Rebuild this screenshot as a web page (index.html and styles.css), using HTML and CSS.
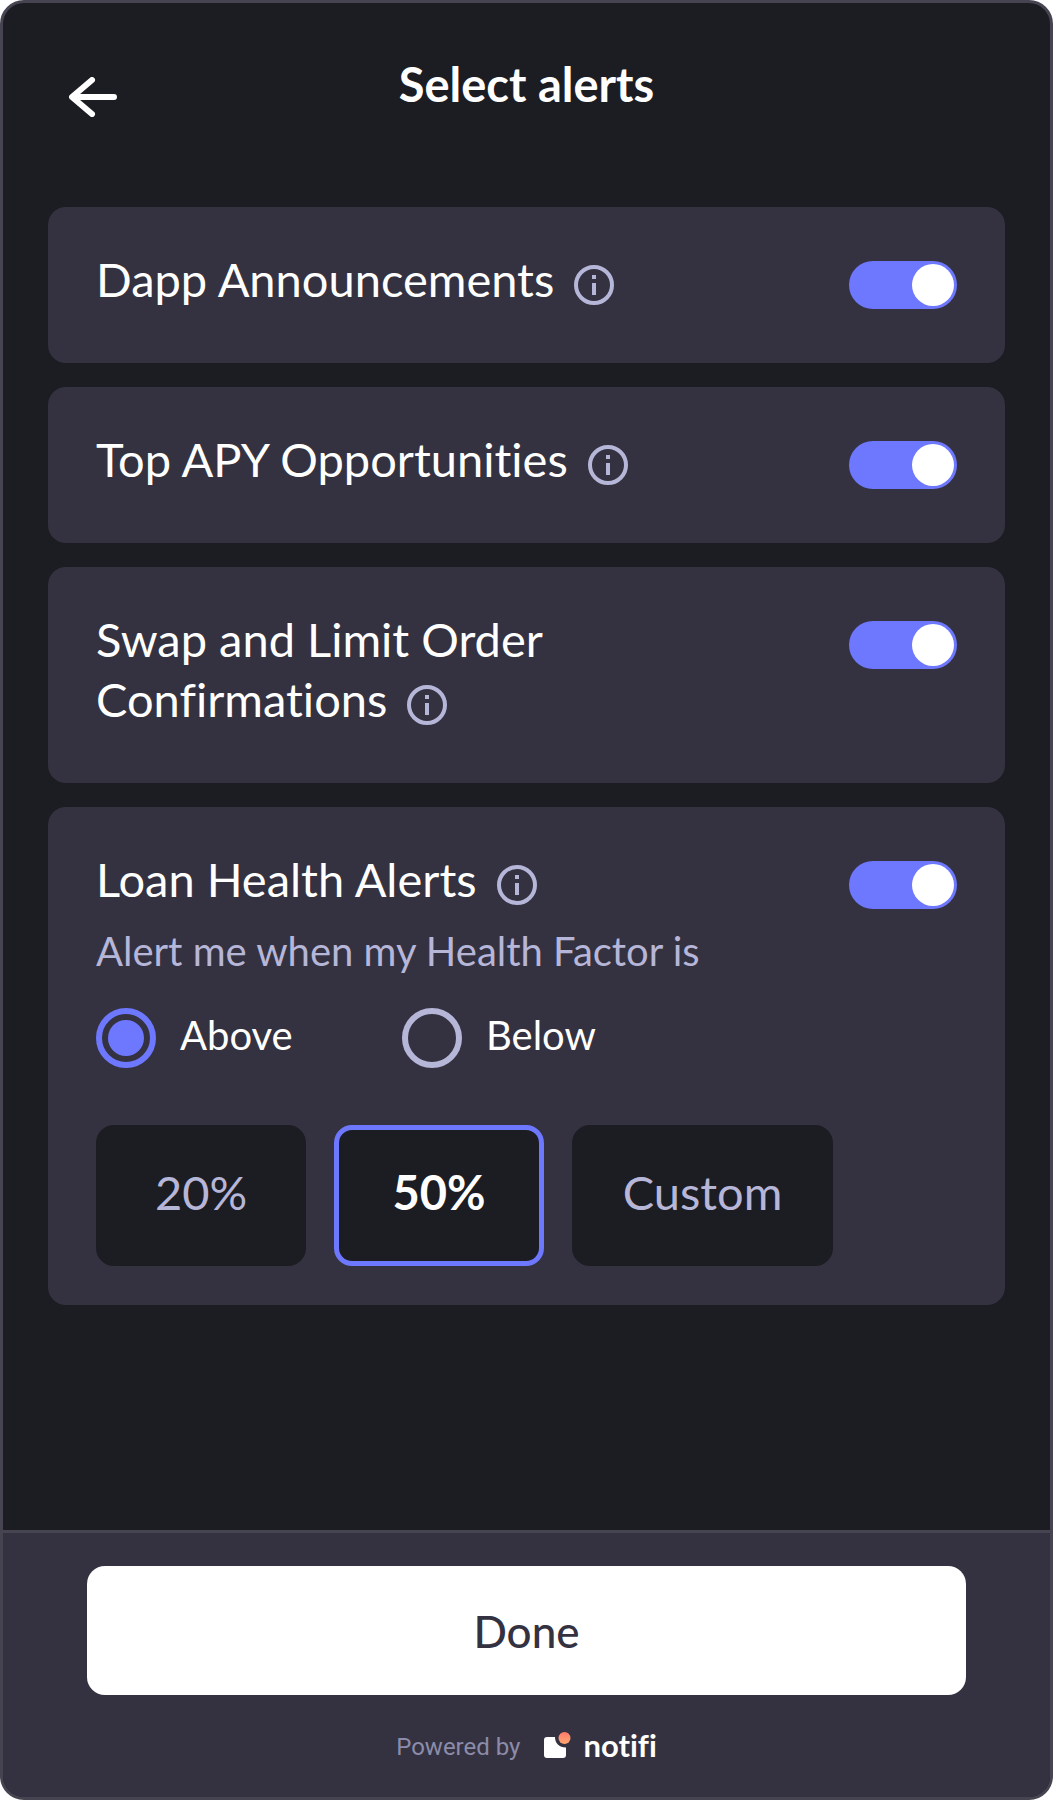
FILE: index.html
```html
<!DOCTYPE html>
<html lang="en">
<head>
  <meta charset="utf-8">
  <meta name="viewport" content="width=device-width, initial-scale=1">
  <title>Select alerts</title>
  <link rel="stylesheet" href="styles.css">
</head>
<body>
  <svg class="sprite">
    <symbol id="icon-info" viewBox="0 0 40 40">
      <circle cx="20" cy="20" r="18" fill="none" stroke="currentColor" stroke-width="4"/>
      <path d="M18 10h4v4h-4zM18 18h4v12h-4z" fill="currentColor"/>
    </symbol>
  </svg>
  <div class="panel">
    <header class="header">
      <button class="back" type="button" aria-label="Back">
        <svg viewBox="0 0 48 40" width="48" height="40" fill="none" stroke="currentColor" stroke-width="6" stroke-linecap="round" stroke-linejoin="round">
          <path d="M45 20H4M23 3L3 20L23 37"/>
        </svg>
      </button>
      <h1 class="title">Select alerts</h1>
    </header>

    <main class="alerts">
      <section class="card">
        <div class="card-head">
          <div class="name"><label for="dapp">Dapp Announcements</label><button class="info" type="button" aria-label="About Dapp Announcements"><svg><use href="#icon-info"/></svg></button></div>
          <input class="toggle" type="checkbox" id="dapp" checked>
        </div>
      </section>

      <section class="card">
        <div class="card-head">
          <div class="name"><label for="apy">Top APY Opportunities</label><button class="info" type="button" aria-label="About Top APY Opportunities"><svg><use href="#icon-info"/></svg></button></div>
          <input class="toggle" type="checkbox" id="apy" checked>
        </div>
      </section>

      <section class="card">
        <div class="card-head">
          <div class="name"><label for="swap">Swap and Limit Order Confirmations</label><button class="info" type="button" aria-label="About Swap and Limit Order Confirmations"><svg><use href="#icon-info"/></svg></button></div>
          <input class="toggle" type="checkbox" id="swap" checked>
        </div>
      </section>

      <section class="card card-options">
        <div class="card-head">
          <div class="name"><label for="loan">Loan Health Alerts</label><button class="info" type="button" aria-label="About Loan Health Alerts"><svg><use href="#icon-info"/></svg></button></div>
          <input class="toggle" type="checkbox" id="loan" checked>
        </div>
        <p class="hint" id="hint">Alert me when my Health Factor is</p>
        <div class="radios" role="radiogroup" aria-labelledby="hint">
          <label class="choice"><input class="radio" type="radio" name="direction" checked><span class="choice-text">Above</span></label>
          <label class="choice"><input class="radio" type="radio" name="direction"><span class="choice-text">Below</span></label>
        </div>
        <div class="chips">
          <button class="chip" type="button">20%</button>
          <button class="chip chip-selected" type="button" aria-pressed="true">50%</button>
          <button class="chip chip-wide" type="button">Custom</button>
        </div>
      </section>
    </main>

    <footer class="footer">
      <button class="done" type="button">Done</button>
      <div class="powered">
        <span>Powered by</span>
        <a class="brand" href="#">
          <svg class="brand-mark" viewBox="0 0 27 26" width="27" height="26">
            <defs>
              <linearGradient id="dot" x1="0" y1="0" x2="0" y2="1">
                <stop offset="0" stop-color="#ff7a6c"/>
                <stop offset="1" stop-color="#ffa870"/>
              </linearGradient>
            </defs>
            <path d="M3 5H11C11 11 15 15.500 22 15.500V23A3 3 0 0 1 19 26H3A3 3 0 0 1 0 23V8A3 3 0 0 1 3 5Z" fill="#fff"/>
            <circle cx="20.500" cy="6" r="6" fill="url(#dot)"/>
          </svg>
          <span class="brand-name">notifi</span>
        </a>
      </div>
    </footer>
  </div>
</body>
</html>
```
FILE: styles.css
```css
:root {
  --bg: #1c1d22;
  --surface: #343240;
  --line: #464451;
  --accent: #6e78ff;
  --muted: #b6b6d8;
  --text: #fff;
}

* {
  box-sizing: border-box;
}

body {
  margin: 0;
  background: #fff;
  font-family: Lato, sans-serif;
  font-variant-ligatures: none;
  color: var(--text);
}

button {
  padding: 0;
  border: 0;
  background: none;
  font: inherit;
  font-variant-ligatures: none;
  color: inherit;
  cursor: pointer;
}

.sprite {
  display: none;
}

.panel {
  display: flex;
  flex-direction: column;
  min-height: 100vh;
  border: 3px solid var(--line);
  border-radius: 24px;
  background: var(--bg);
  overflow: hidden;
}

.header {
  display: grid;
  grid-template-columns: 1fr auto 1fr;
  min-height: 63px;
  margin: 51px 66px 90px;
}

.back {
  align-self: end;
  justify-self: start;
  width: 48px;
  height: 40px;
}

.back svg {
  display: block;
}

.title {
  margin: 0;
  font-size: 47px;
  line-height: 60px;
  font-weight: 700;
}

.alerts {
  display: flex;
  flex-direction: column;
  gap: 24px;
  padding: 0 45px 48px;
}

.card {
  padding: 42px 48px 54px;
  border-radius: 18px;
  background: var(--surface);
}

.card-options {
  padding-bottom: 39px;
}

.card-head {
  display: flex;
  justify-content: space-between;
  align-items: flex-start;
  gap: 144px;
}

.name {
  font-size: 47px;
  line-height: 60px;
}

.info {
  width: 40px;
  height: 40px;
  margin-left: 20px;
  vertical-align: -8px;
  line-height: 0;
  color: var(--muted);
}

.info svg {
  display: block;
  width: 40px;
  height: 40px;
}

.toggle {
  appearance: none;
  flex: none;
  display: flex;
  justify-content: flex-start;
  width: 108px;
  height: 48px;
  margin: 12px 0 0;
  padding: 3px;
  border-radius: 24px;
  background: var(--muted);
}

.toggle::before {
  content: "";
  width: 42px;
  height: 42px;
  border-radius: 50%;
  background: #fff;
}

.toggle:checked {
  justify-content: flex-end;
  background: var(--accent);
}

.hint {
  margin: 18px 0 33px;
  font-size: 40px;
  line-height: 48px;
  color: var(--muted);
}

.radios {
  display: flex;
  flex-wrap: wrap;
}

.choice {
  display: flex;
  align-items: center;
  gap: 24px;
  min-width: 306px;
  font-size: 40px;
  line-height: 48px;
}

.choice-text {
  padding-bottom: 6px;
}

.radio {
  appearance: none;
  display: grid;
  place-content: center;
  width: 60px;
  height: 60px;
  margin: 0;
  border: 6px solid var(--muted);
  border-radius: 50%;
}

.radio:checked {
  border-color: var(--accent);
}

.radio:checked::before {
  content: "";
  width: 36px;
  height: 36px;
  border-radius: 50%;
  background: var(--accent);
}

.chips {
  display: flex;
  flex-wrap: wrap;
  gap: 28px;
  margin-top: 57px;
}

.chip {
  width: 210px;
  height: 141px;
  padding-bottom: 8px;
  border: 5px solid var(--bg);
  border-radius: 18px;
  background: var(--bg);
  font-size: 47px;
  color: var(--muted);
}

.chip-wide {
  width: 261px;
}

.chip-selected {
  border-color: var(--accent);
  font-weight: 700;
  color: var(--text);
}

.footer {
  margin-top: auto;
  padding: 33px 84px 32px;
  border-top: 3px solid var(--line);
  background: var(--surface);
}

.done {
  display: block;
  width: 100%;
  height: 129px;
  border-radius: 18px;
  background: #fff;
  font-size: 44px;
  font-weight: 500;
  color: var(--surface);
}

.powered {
  display: flex;
  justify-content: center;
  align-items: center;
  gap: 24px;
  height: 36px;
  margin-top: 34px;
  font-family: Roboto, sans-serif;
  font-size: 24px;
  line-height: 36px;
  color: #8c8caa;
}

.brand {
  display: flex;
  align-items: center;
  gap: 12px;
  color: var(--text);
  text-decoration: none;
}

.brand-mark {
  display: block;
  margin-bottom: 4px;
}

.brand-name {
  padding-bottom: 4px;
  font-family: Lato, sans-serif;
  font-size: 31px;
  font-weight: 700;
}
```
